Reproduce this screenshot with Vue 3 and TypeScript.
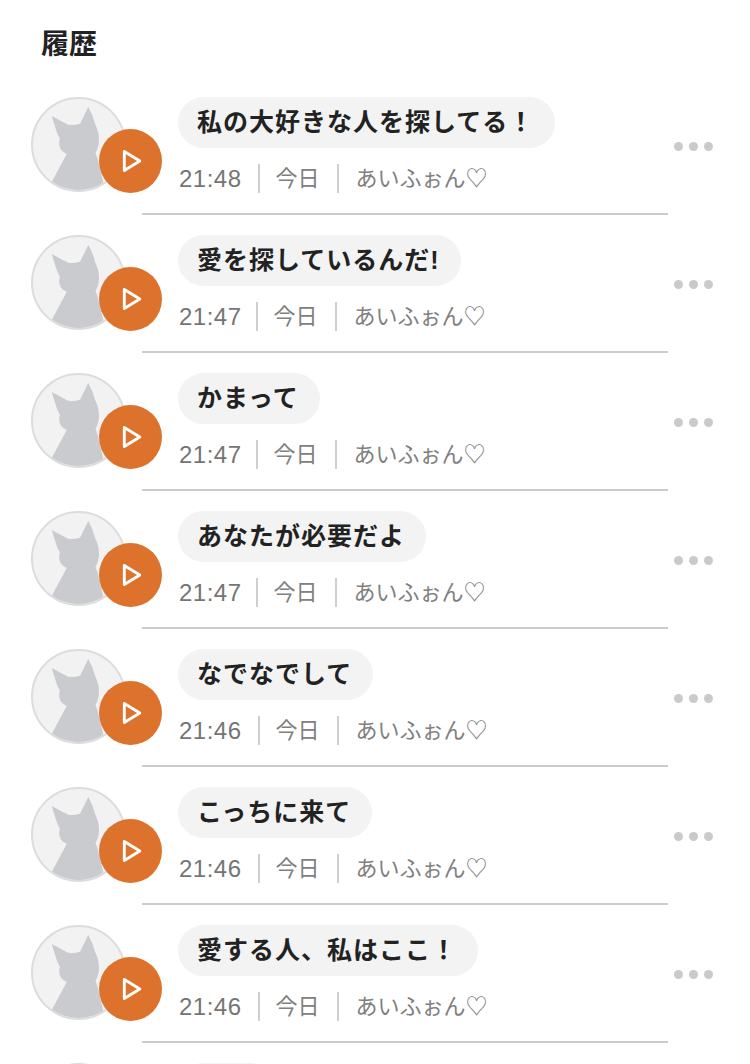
<template>
  <div class="page">
    <h1 class="title">履歴</h1>
    <ul class="list">
      <li v-for="(item, idx) in items" :key="idx" class="row">
        <div class="row-main">
          <div class="thumb">
            <div class="avatar">
              <svg class="cat" viewBox="0 0 91 91" width="91" height="91">
                <path d="M18.7 17 L35 25.7 Q41 26.5 47 24.7 L55.3 8 Q60 16 62 24.7 Q66 33 66 40 Q66 48 62.5 54 L64.7 60 L72 91 L10 91 L18.7 83 L33.7 55 Q27 52 26.3 46 Q26 41 27 39.7 L24.3 34.7 Z" />
              </svg>
            </div>
            <button class="play" type="button" aria-label="play">
              <svg viewBox="0 0 24 26" width="24" height="26">
                <path d="M5.3 3.5 L20.8 13 L5.3 22.5 Z" />
              </svg>
            </button>
          </div>
          <div class="body">
            <div class="bubble">{{ item.text }}</div>
            <div v-if="item.time" class="meta">
              <span class="time" :class="{ tight: item.time.endsWith('7') }">{{ item.time }}</span>
              <span class="sep"></span>
              <span>今日</span>
              <span class="sep sep-wide"></span>
              <span>あいふぉん♡</span>
            </div>
          </div>
          <div v-if="item.time" class="more"><i></i><i></i><i></i></div>
        </div>
      </li>
    </ul>
  </div>
</template>

<script setup lang="ts">
interface HistoryItem {
  text: string;
  time: string;
}

// the last row only peeks in at the bottom edge, so it has no readable text
const items: HistoryItem[] = [
  { text: '私の大好きな人を探してる！', time: '21:48' },
  { text: '愛を探しているんだ!', time: '21:47' },
  { text: 'かまって', time: '21:47' },
  { text: 'あなたが必要だよ', time: '21:47' },
  { text: 'なでなでして', time: '21:46' },
  { text: 'こっちに来て', time: '21:46' },
  { text: '愛する人、私はここ！', time: '21:46' },
  { text: '', time: '' }
];
</script>

<style>
html,
body {
  background: #fff;
}
</style>

<style scoped>
.page {
  height: 1064px;
  overflow: hidden;
  background: #fff;
  font-family: "Liberation Sans", "Noto Sans CJK JP", sans-serif;
}

.title {
  margin: 0;
  padding: 26px 0 0 41px;
  height: 97px;
  box-sizing: border-box;
  font-size: 28px;
  line-height: 38px;
  font-weight: 700;
  color: #222;
}

.list {
  margin: 0;
  padding: 0;
  list-style: none;
}

.row {
  height: 138px;
}

.row-main {
  display: flex;
  height: 116px;
  padding: 0 37px 0 31px;
  position: relative;
}

/* divider under each row, starts under the play button */
.row-main::after {
  content: "";
  position: absolute;
  left: 142px;
  top: 116px;
  width: 526px;
  height: 2px;
  background: #cbcbcb;
}

.row:last-child .row-main::after {
  display: none;
}

.thumb {
  position: relative;
  flex: 0 0 147px;
}

.avatar {
  width: 95px;
  height: 95px;
  box-sizing: border-box;
  border: 2px solid #dcdcdd;
  border-radius: 50%;
  background: #f2f2f3;
  overflow: hidden;
}

.cat {
  display: block;
  fill: #c9cbcf;
}

.play {
  position: absolute;
  left: 68px;
  top: 32px;
  width: 63px;
  height: 64px;
  padding: 0;
  border: 0;
  border-radius: 50%;
  background: #dc722c;
  display: flex;
  align-items: center;
  justify-content: center;
}

.play svg {
  fill: none;
  stroke: #fff;
  stroke-width: 2.9;
  stroke-linejoin: round;
}

.body {
  flex: 1;
  min-width: 0;
}

.bubble {
  display: inline-block;
  height: 51px;
  padding: 0 21px 0 19px;
  border-radius: 26px;
  background: #f3f3f4;
  font-size: 25px;
  line-height: 50px;
  font-weight: 700;
  letter-spacing: 1px;
  color: #222;
  vertical-align: top;
}

.bubble:empty {
  width: 57px;
}

.meta {
  display: flex;
  align-items: center;
  height: 29px;
  margin-top: 16px;
  padding-left: 1px;
  font-size: 22px;
  line-height: 29px;
  color: #808080;
}

.time {
  font-size: 24px;
  letter-spacing: 0.5px;
  color: #757575;
}

.time.tight {
  margin-right: -2px;
}

.sep {
  width: 2px;
  height: 29px;
  margin: 0 16px;
  background: #cfcfcf;
}

.sep-wide {
  margin: 0 17px;
}

.more {
  display: flex;
  gap: 6px;
  margin-top: 45px;
  height: 9px;
}

.more i {
  display: block;
  width: 9px;
  height: 9px;
  border-radius: 50%;
  background: #c9cacc;
}
</style>
